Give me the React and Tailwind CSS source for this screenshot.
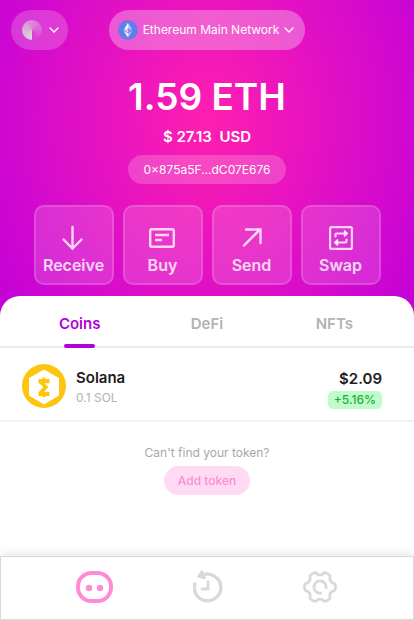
import { useState } from "react";

function Chevron() {
  return (
    <svg width="10" height="6" viewBox="0 0 10 6" fill="none" stroke="currentColor" strokeWidth="1.3" strokeLinecap="round" strokeLinejoin="round" aria-hidden="true">
      <path d="M1 1l4 4 4-4" />
    </svg>
  );
}

function EthereumIcon() {
  return (
    <svg width="20" height="20" viewBox="0 0 20 20" aria-hidden="true">
      <circle cx="10" cy="10" r="10" fill="#627eea" />
      <path d="M10 2.8v5.4l4.3 1.9z" fill="#c5d0f8" />
      <path d="M10 2.8L5.7 10.1 10 8.2z" fill="#fff" />
      <path d="M10 8.2v4.5l4.3-2.6z" fill="#8197ee" />
      <path d="M5.7 10.1L10 12.7V8.2z" fill="#c5d0f8" />
      <path d="M10 13.6v3.6l4.3-6.1z" fill="#c5d0f8" />
      <path d="M5.7 11.1L10 17.2v-3.6z" fill="#fff" />
    </svg>
  );
}

function ReceiveIcon() {
  return (
    <svg width="28" height="28" viewBox="0 0 28 28" fill="none" stroke="currentColor" strokeWidth="2.4" strokeLinecap="round" strokeLinejoin="miter" aria-hidden="true">
      <path d="M12.5 4v21.5M3.5 16.5l9 9 9-9" />
    </svg>
  );
}

function BuyIcon() {
  return (
    <svg width="28" height="28" viewBox="0 0 28 28" fill="none" stroke="currentColor" strokeWidth="2.4" aria-hidden="true">
      <rect x="1.2" y="6.2" width="23.6" height="17.6" rx="1.5" />
      <path d="M6 12h14M6 17h7" />
    </svg>
  );
}

function SendIcon() {
  return (
    <svg width="28" height="28" viewBox="0 0 28 28" fill="none" stroke="currentColor" strokeWidth="2.4" strokeLinecap="round" aria-hidden="true">
      <path d="M6 22.5L21.5 7M8 6.500h14.500v13.500" />
    </svg>
  );
}

function SwapIcon() {
  return (
    <svg width="28" height="28" viewBox="0 0 28 28" fill="none" stroke="currentColor" strokeWidth="2.2" strokeLinecap="round" strokeLinejoin="round" aria-hidden="true">
      <rect x="3.1" y="4.1" width="21.8" height="21.8" rx="1.5" />
      <path d="M8.500 13.500v-2q0-1 1-1H17M19.500 16.500v2q0 1-1 1H11" />
      <path d="M17.500 7.800v5.400l3-2.700zM10.500 16.800v5.400l-3-2.700z" fill="currentColor" strokeWidth="1.4" />
    </svg>
  );
}

function CoinIcon() {
  return (
    <svg className="shrink-0" width="44" height="44" viewBox="0 0 44 44" aria-hidden="true">
      <circle cx="22" cy="22" r="22" fill="#ffc40d" />
      <path d="M22 5.5L37 14v17.5L22 40.5 7 31.5V14z" fill="#fff" />
      <path d="M16.500 15H20.500V13.500h2.800V15H27.500v4.300h-5.300l4.100 3.700-4.100 4.700h5.300V32h-4.200v1.300h-2.800V32h-4v-3.700l4.900-5.300-4.900-4.300z" fill="#ffc40d" />
    </svg>
  );
}

function WalletIcon() {
  return (
    <svg width="38" height="34" viewBox="0 0 38 34" aria-hidden="true">
      <rect x="2" y="3" width="33" height="28" rx="13.5" fill="none" stroke="#ff8ad8" strokeWidth="4" />
      <circle cx="13" cy="18" r="3.2" fill="#ff8ad8" />
      <circle cx="24" cy="18" r="3.2" fill="#ff8ad8" />
    </svg>
  );
}

function HistoryIcon() {
  return (
    <svg width="32" height="34" viewBox="0 0 32 34" fill="none" stroke="#d9d9d9" strokeWidth="3.4" aria-hidden="true">
      <path d="M1.700 14A13.300 13.300 0 1 0 10.700 4.700" strokeLinecap="round" />
      <path d="M15 10.500v8.500H8" strokeWidth="2.8" />
      <path d="M8.800 1.500L11.800 8 5.500 6.500z" fill="#d9d9d9" strokeWidth="2.4" strokeLinejoin="round" />
    </svg>
  );
}

// Closed, rounded outline of a six-toothed gear centred on (17, 17).
function gearOutline() {
  const points = [];
  for (let tooth = 0; tooth < 6; tooth++) {
    for (const [radius, offset] of [[15.8, -13], [15.8, 13], [12.3, 19], [12.3, 41]]) {
      const angle = ((tooth * 60 + offset) * Math.PI) / 180;
      points.push([17 + radius * Math.cos(angle), 17 + radius * Math.sin(angle)]);
    }
  }
  const middle = (a, b) => `${(a[0] + b[0]) / 2} ${(a[1] + b[1]) / 2}`;
  const curves = points.map((p, i) => `Q${p[0]} ${p[1]} ${middle(p, points[(i + 1) % points.length])}`);
  return `M${middle(points[points.length - 1], points[0])}${curves.join("")}z`;
}

const gearPath = gearOutline();

function SettingsIcon() {
  return (
    <svg width="34" height="34" viewBox="0 0 34 34" fill="none" stroke="#d9d9d9" strokeWidth="2.8" strokeLinejoin="round" aria-hidden="true">
      <path d={gearPath} />
      <path d="M22.800 19A6.100 6.100 0 1 0 18.800 22.900" />
    </svg>
  );
}

const actions = [
  { label: "Receive", Icon: ReceiveIcon },
  { label: "Buy", Icon: BuyIcon },
  { label: "Send", Icon: SendIcon },
  { label: "Swap", Icon: SwapIcon },
];

const tabs = ["Coins", "DeFi", "NFTs"];

export default function App() {
  const [tab, setTab] = useState("Coins");

  return (
    <div className="flex min-h-screen flex-col bg-[#c000da] bg-[radial-gradient(265px_340px_at_50%_120px,#ff1fb0_0%,#c000da_100%)] font-['Inter',sans-serif]">
      <header className="pb-[11px] text-white">
        <div className="grid grid-cols-[1fr_auto_1fr] items-center px-[11px] pt-[10px]">
          <button type="button" aria-label="Account" className="flex h-10 w-[57px] items-center gap-[7px] rounded-full bg-white/20 pl-[11px]">
            <span className="size-5 rounded-full bg-[conic-gradient(from_180deg,#d9d9d9,#d9d9d900)]" />
            <Chevron />
          </button>
          <button type="button" className="flex h-10 items-center gap-[5px] rounded-full bg-white/30 pr-[11px] pl-[9px] text-[12px] whitespace-nowrap">
            <EthereumIcon />
            Ethereum Main Network
            <Chevron />
          </button>
        </div>

        <div className="flex flex-col items-center">
          <h1 className="mt-[23px] text-[37px] leading-[48px] font-semibold">1.59 ETH</h1>
          <p className="mt-1 text-[15px] leading-6 font-semibold whitespace-pre">$ 27.13  USD</p>
          <button type="button" className="mt-[6px] h-[29px] rounded-full bg-white/20 px-4 text-[12px]">
            0×875a5F...dC07E676
          </button>
        </div>

        <div className="mt-[21px] flex justify-center gap-[9px]">
          {actions.map(({ label, Icon }) => (
            <button key={label} type="button" className="flex size-20 flex-col items-center justify-end gap-[2px] rounded-[10px] border-2 border-white/15 bg-white/15 pb-[6px] text-white/80">
              <Icon />
              <span className="text-[16px] leading-6 font-semibold">{label}</span>
            </button>
          ))}
        </div>
      </header>

      <main className="flex-1 rounded-t-[20px] bg-white">
        <div role="tablist" className="grid h-[52px] grid-cols-3 border-b-2 border-[#ebebeb] px-4">
          {tabs.map((name) => (
            <button
              key={name}
              type="button"
              role="tab"
              aria-selected={tab === name}
              onClick={() => setTab(name)}
              className={
                "-mb-[2px] flex flex-col items-center justify-between pt-4 text-[15px] leading-6 font-semibold " +
                (tab === name ? "text-[#b000dc]" : "text-[#b3b3b3]")
              }
            >
              {name}
              {tab === name && <span className="h-1 w-[31px] rounded-[2px] bg-[#b000dc]" />}
            </button>
          ))}
        </div>

        <div className="flex h-[74px] items-center gap-[10px] border-b-2 border-[#f2f2f2] pt-1 pr-8 pl-[22px]">
          <CoinIcon />
          <div className="flex-1">
            <p className="text-[15px] leading-6 font-semibold text-[#1c1c1e]">Solana</p>
            <p className="text-[12px] leading-4 text-[#b3b3b3]">0.1 SOL</p>
          </div>
          <div className="flex flex-col items-end pt-1">
            <p className="text-[15px] leading-6 font-semibold text-[#1c1c1e]">$2.09</p>
            <p className="rounded-[5px] bg-[#c0fbcb] px-[6px] text-[12px] leading-[18px] font-medium text-[#16b333]">+5.16%</p>
          </div>
        </div>

        <div className="flex flex-col items-center pt-[23px]">
          <p className="text-[12px] leading-4 text-[#a8a8a8]">Can't find your token?</p>
          <button type="button" className="mt-[5px] h-[29px] rounded-full bg-[#ffdaf3] px-[14px] text-[12px] font-medium text-[#ff8ad8]">
            Add token
          </button>
        </div>
      </main>

      <nav className="flex h-16 items-center justify-between border border-[#d9d9d9] bg-white pr-[76px] pb-[2px] pl-[75px] shadow-[0_-2px_10px_rgba(0,0,0,0.1)]">
        <button type="button" aria-label="Wallet"><WalletIcon /></button>
        <button type="button" aria-label="History"><HistoryIcon /></button>
        <button type="button" aria-label="Settings"><SettingsIcon /></button>
      </nav>
    </div>
  );
}
